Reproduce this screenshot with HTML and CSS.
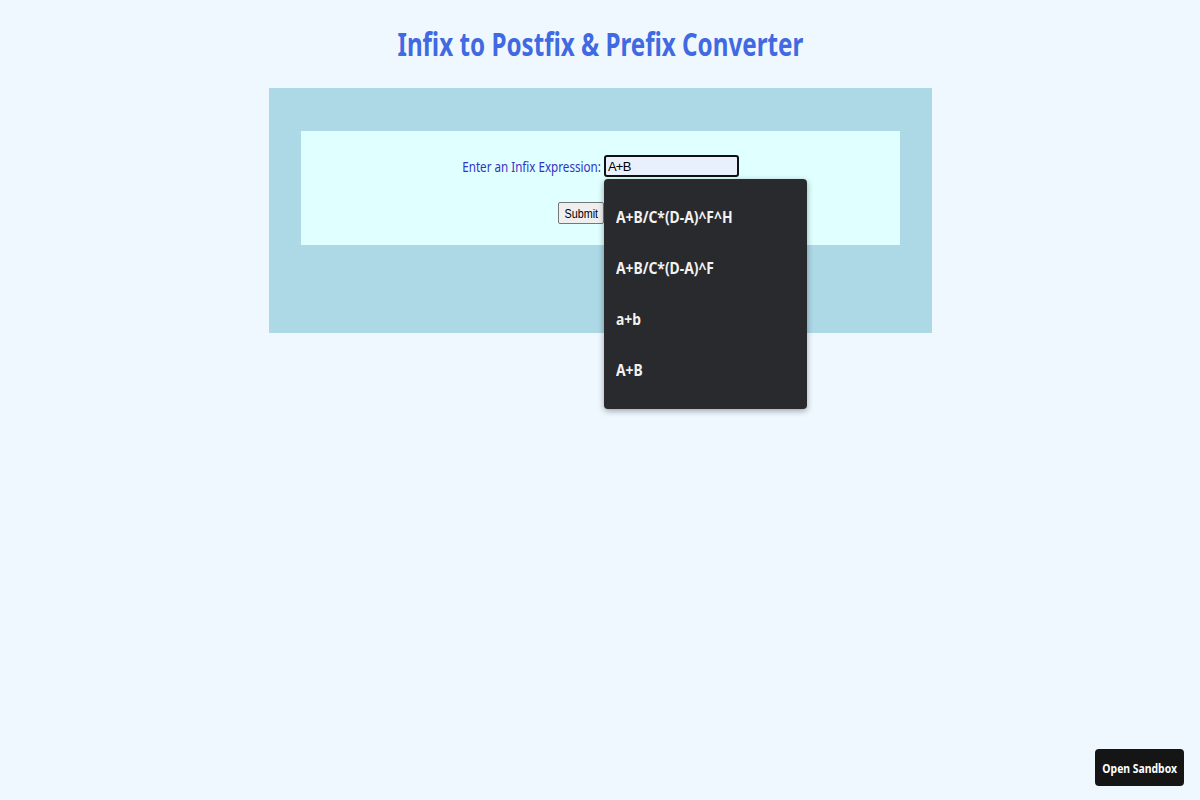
FILE: index.html
```html
<!DOCTYPE html>
<html>
<head>
<meta charset="utf-8">
<link rel="stylesheet" href="styles.css">
</head>
<body>
<h1 class="title">Infix to Postfix &amp; Prefix Converter</h1>
<div class="outer">
  <div class="inner">
    <div class="form">
      <label class="label" for="expr">Enter an Infix Expression:</label>
      <div class="field">
        <input id="expr" class="input" type="text" value="A+B">
        <ul class="suggest">
          <li><span class="item">A+B/C*(D-A)^F^H</span></li>
          <li><span class="item">A+B/C*(D-A)^F</span></li>
          <li><span class="item">a+b</span></li>
          <li><span class="item">A+B</span></li>
        </ul>
      </div>
      <button class="submit" type="button"><span class="submit-text">Submit</span></button>
    </div>
  </div>
  <div class="result"></div>
</div>
<button class="sandbox" type="button"><span class="sandbox-text">Open Sandbox</span></button>
</body>
</html>
```
FILE: styles.css
```css
html, body {
  margin: 0;
  padding: 0;
}
body {
  background: #f0f8ff;
  width: 1200px;
  height: 800px;
  position: relative;
  font-family: "Noto Sans", sans-serif;
  display: flex;
  flex-direction: column;
  align-items: center;
}
.title {
  margin: 21px 0 0;
  font-size: 32px;
  font-weight: bold;
  color: #4169e1;
  line-height: 46px;
  transform: scaleX(0.756);
  transform-origin: center;
  white-space: nowrap;
}
.outer {
  margin-top: 21px;
  width: 663px;
  box-sizing: border-box;
  background: #add8e6;
  padding: 43px 32px 0;
}
.inner {
  background: #e0ffff;
  height: 114px;
  box-sizing: border-box;
  padding-top: 24px;
  display: flex;
  justify-content: center;
}
.form {
  display: grid;
  grid-template-columns: 138px 135px;
  column-gap: 3px;
  row-gap: 25px;
  align-items: center;
  align-self: flex-start;
  padding-left: 2px;
}
.label {
  justify-self: end;
  white-space: nowrap;
  font-size: 15px;
  color: #3232c4;
  transform: scaleX(0.775);
  transform-origin: right center;
}
.field {
  position: relative;
  width: 135px;
  height: 22px;
}
.input {
  display: block;
  box-sizing: border-box;
  width: 135px;
  height: 22px;
  border: 2px solid #101010;
  border-radius: 3px;
  background: #e8f0fe;
  font-family: "Liberation Sans", Arial, sans-serif;
  font-size: 13px;
  letter-spacing: -0.8px;
  padding: 0 2px;
  margin: 0;
  outline: none;
  color: #000;
}
.suggest {
  position: absolute;
  left: 0;
  top: 24px;
  width: 203px;
  height: 230px;
  margin: 0;
  padding: 13px 0 0;
  box-sizing: border-box;
  list-style: none;
  background: #292a2d;
  border-radius: 4px;
  box-shadow: 0 2px 6px rgba(0,0,0,0.35);
  z-index: 5;
}
.suggest li {
  height: 51px;
  line-height: 51px;
  padding-left: 12px;
  color: #f2f2f2;
  font-size: 16px;
  font-weight: bold;
}
.item {
  display: inline-block;
  white-space: nowrap;
  transform: scaleX(0.866);
  transform-origin: left center;
}
.submit {
  grid-column: 1;
  justify-self: end;
  margin-right: -3px;
  font-family: "Liberation Sans", Arial, sans-serif;
  font-size: 13px;
  height: 22px;
  width: 46px;
  padding: 0;
  border: 1px solid #767676;
  border-radius: 2px;
  background: #efefef;
  color: #000;
  display: flex;
  align-items: center;
  justify-content: center;
  overflow: visible;
}
.submit-text {
  display: inline-block;
  transform: scaleX(0.83);
  white-space: nowrap;
}
.result {
  height: 88px;
}
.sandbox {
  position: absolute;
  right: 16px;
  bottom: 14px;
  width: 89px;
  height: 37px;
  background: #151515;
  color: #fff;
  border: none;
  border-radius: 4px;
  font-family: "Noto Sans", sans-serif;
  font-weight: bold;
  font-size: 13px;
  padding: 0;
  display: flex;
  align-items: center;
  justify-content: center;
  overflow: visible;
}
.sandbox-text {
  display: inline-block;
  white-space: nowrap;
  transform: scaleX(0.8);
}
```
